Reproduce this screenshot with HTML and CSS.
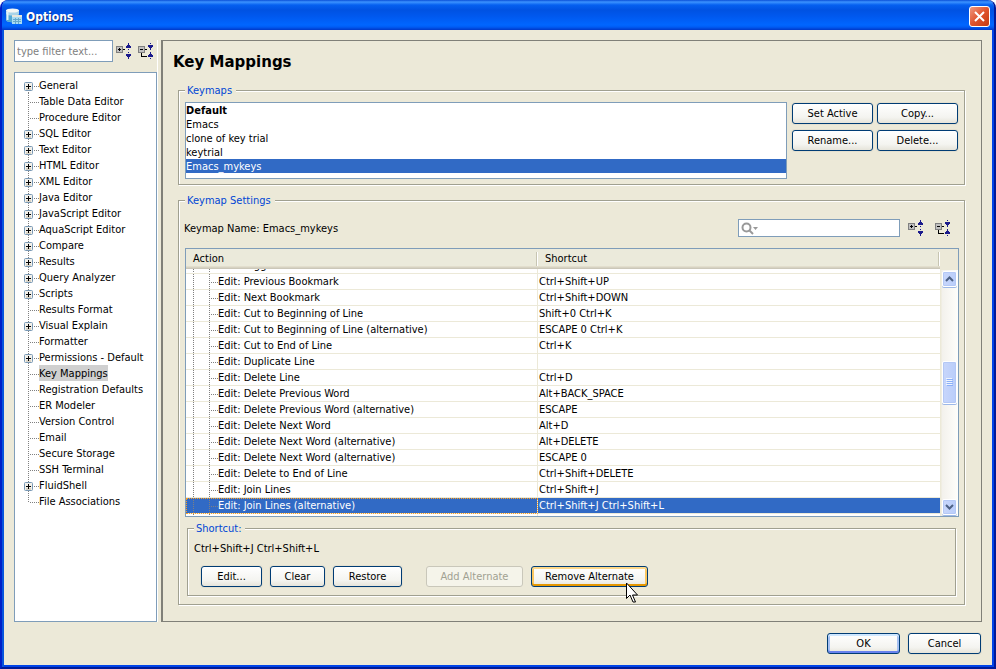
FILE: index.html
```html
<!DOCTYPE html>
<html lang="en">
<head>
    <meta charset="UTF-8">
    <meta name="viewport" content="width=device-width, initial-scale=1.0">
    <title>Options</title>
    <link rel="stylesheet" href="styles.css">
</head>
<body>
    <!-- Shared icons -->
    <svg class="defs" width="0" height="0" aria-hidden="true">
        <symbol id="plus" viewBox="0 0 9 9">
            <rect x=".5" y=".5" width="8" height="8" rx="1" fill="#f2f0ea" stroke="#7898b5"/>
            <path d="M2 6h5v2H2z" fill="#d8d2c4"/>
            <path d="M2 4.500h5M4.500 2v5" stroke="#000"/>
        </symbol>
        <symbol id="expand" viewBox="0 0 16 16">
            <path d="M.5 3.500h6v6h-6z" fill="#c0c0c0" stroke="#808080"/>
            <path d="M2 6.500h3M3.500 5v3M7 6.500h2" stroke="#000"/>
            <path d="M12 0h1v2h1v1h1v2h-5V3h1V2h1zM10 11h5v2h-1v1h-1v2h-1v-2h-1v-1h-1zM12 6h1v1h-1zM12 9h1v1h-1z" fill="#1a1a8c"/>
        </symbol>
        <symbol id="collapse" viewBox="0 0 16 16">
            <path d="M.5 3.500h6v6h-6z" fill="#c0c0c0" stroke="#808080"/>
            <path d="M2 6.500h3M7 6.500h2M3.500 10v3.500H9" fill="none" stroke="#000"/>
            <path d="M12 0h1v1h-1zM10 2h5v2h-1v1h-1v2h-1V5h-1V4h-1zM12 9h1v2h1v1h1v2h-5v-2h1v-1h1zM12 15h1v1h-1z" fill="#1a1a8c"/>
        </symbol>
    </svg>

    <div class="window">
        <header class="titlebar">
            <svg class="app-icon" viewBox="0 0 17 17" width="17" height="17" aria-hidden="true">
                <path d="M0 2v10c0 3 13 3 13 0V2z" fill="#a9d4e8"/>
                <path d="M0 6c2 2 11 2 13 0v6c0 3-13 3-13 0z" fill="#52a9d4"/>
                <ellipse cx="6.500" cy="2.500" rx="6.500" ry="2" fill="#f4f7f4"/>
                <path d="M1.500 4v8" stroke="#e3f2f8" stroke-width="2"/>
                <path d="M6 7h10v9H6z" fill="#a9dcf2"/>
                <path d="M6 7h10v2H6z" fill="#e6e6dc"/>
                <path d="M7 11.500h8M7 13.500h8M9.500 10v6M12.500 10v6" stroke="#66a9cb"/>
            </svg>
            <h1 class="window-title">Options</h1>
            <button class="close" type="button" aria-label="Close">
                <svg viewBox="0 0 11 11" width="11" height="11"><path d="M1 1l9 9M10 1l-9 9" stroke="#fff" stroke-width="2"/></svg>
            </button>
        </header>

        <main class="main">
            <nav class="sidebar">
                <div class="filter">
                    <input class="filter-input" type="text" placeholder="type filter text..." aria-label="Filter">
                    <button class="icon-button" type="button" aria-label="Expand all"><svg class="icon"><use href="#expand"/></svg></button>
                    <button class="icon-button" type="button" aria-label="Collapse all"><svg class="icon"><use href="#collapse"/></svg></button>
                </div>
                <ul class="tree">
                    <li class="branch"><button class="toggle" type="button" aria-label="Expand"><svg><use href="#plus"/></svg></button><a href="#">General</a></li>
                    <li><a href="#">Table Data Editor</a></li>
                    <li><a href="#">Procedure Editor</a></li>
                    <li class="branch"><button class="toggle" type="button" aria-label="Expand"><svg><use href="#plus"/></svg></button><a href="#">SQL Editor</a></li>
                    <li class="branch"><button class="toggle" type="button" aria-label="Expand"><svg><use href="#plus"/></svg></button><a href="#">Text Editor</a></li>
                    <li class="branch"><button class="toggle" type="button" aria-label="Expand"><svg><use href="#plus"/></svg></button><a href="#">HTML Editor</a></li>
                    <li class="branch"><button class="toggle" type="button" aria-label="Expand"><svg><use href="#plus"/></svg></button><a href="#">XML Editor</a></li>
                    <li class="branch"><button class="toggle" type="button" aria-label="Expand"><svg><use href="#plus"/></svg></button><a href="#">Java Editor</a></li>
                    <li class="branch"><button class="toggle" type="button" aria-label="Expand"><svg><use href="#plus"/></svg></button><a href="#">JavaScript Editor</a></li>
                    <li class="branch"><button class="toggle" type="button" aria-label="Expand"><svg><use href="#plus"/></svg></button><a href="#">AquaScript Editor</a></li>
                    <li class="branch"><button class="toggle" type="button" aria-label="Expand"><svg><use href="#plus"/></svg></button><a href="#">Compare</a></li>
                    <li class="branch"><button class="toggle" type="button" aria-label="Expand"><svg><use href="#plus"/></svg></button><a href="#">Results</a></li>
                    <li class="branch"><button class="toggle" type="button" aria-label="Expand"><svg><use href="#plus"/></svg></button><a href="#">Query Analyzer</a></li>
                    <li class="branch"><button class="toggle" type="button" aria-label="Expand"><svg><use href="#plus"/></svg></button><a href="#">Scripts</a></li>
                    <li><a href="#">Results Format</a></li>
                    <li class="branch"><button class="toggle" type="button" aria-label="Expand"><svg><use href="#plus"/></svg></button><a href="#">Visual Explain</a></li>
                    <li><a href="#">Formatter</a></li>
                    <li class="branch"><button class="toggle" type="button" aria-label="Expand"><svg><use href="#plus"/></svg></button><a href="#">Permissions - Default</a></li>
                    <li><a class="current" href="#">Key Mappings</a></li>
                    <li><a href="#">Registration Defaults</a></li>
                    <li><a href="#">ER Modeler</a></li>
                    <li><a href="#">Version Control</a></li>
                    <li><a href="#">Email</a></li>
                    <li><a href="#">Secure Storage</a></li>
                    <li><a href="#">SSH Terminal</a></li>
                    <li class="branch"><button class="toggle" type="button" aria-label="Expand"><svg><use href="#plus"/></svg></button><a href="#">FluidShell</a></li>
                    <li><a href="#">File Associations</a></li>
                </ul>
            </nav>

            <section class="panel">
                <h2 class="panel-title">Key Mappings</h2>

                <fieldset class="group keymaps">
                    <legend>Keymaps</legend>
                    <ul class="keymap-list" role="listbox" aria-label="Keymaps">
                        <li class="active" role="option">Default</li>
                        <li role="option">Emacs</li>
                        <li role="option">clone of key trial</li>
                        <li role="option">keytrial</li>
                        <li class="selected" role="option" aria-selected="true">Emacs_mykeys</li>
                    </ul>
                    <div class="keymap-buttons">
                        <button class="btn" type="button">Set Active</button>
                        <button class="btn" type="button">Copy...</button>
                        <button class="btn" type="button">Rename...</button>
                        <button class="btn" type="button">Delete...</button>
                    </div>
                </fieldset>

                <fieldset class="group settings">
                    <legend>Keymap Settings</legend>
                    <div class="toolbar">
                        <span class="keymap-name">Keymap Name: Emacs_mykeys</span>
                        <label class="search">
                            <svg viewBox="0 0 18 13" width="18" height="13" aria-hidden="true">
                                <circle cx="5.500" cy="5.500" r="4" fill="none" stroke="#999" stroke-width="2"/>
                                <path d="M8 8l4 4" stroke="#999" stroke-width="2"/>
                                <path d="M12 5h5l-2.500 3z" fill="#999"/>
                            </svg>
                            <input type="text" aria-label="Search">
                        </label>
                        <button class="icon-button" type="button" aria-label="Expand all"><svg class="icon"><use href="#expand"/></svg></button>
                        <button class="icon-button" type="button" aria-label="Collapse all"><svg class="icon"><use href="#collapse"/></svg></button>
                    </div>

                    <div class="table-box">
                        <table class="actions">
                            <thead>
                                <tr><th class="col-action"><span>Action</span></th><th><span>Shortcut</span></th></tr>
                            </thead>
                            <tbody>
                                <tr class="cut"><td><div>Edit: Toggle Bookmark</div></td><td></td></tr>
                                <tr><td>Edit: Previous Bookmark</td><td>Ctrl+Shift+UP</td></tr>
                                <tr><td>Edit: Next Bookmark</td><td>Ctrl+Shift+DOWN</td></tr>
                                <tr><td>Edit: Cut to Beginning of Line</td><td>Shift+0 Ctrl+K</td></tr>
                                <tr><td>Edit: Cut to Beginning of Line (alternative)</td><td>ESCAPE 0 Ctrl+K</td></tr>
                                <tr><td>Edit: Cut to End of Line</td><td>Ctrl+K</td></tr>
                                <tr><td>Edit: Duplicate Line</td><td></td></tr>
                                <tr><td>Edit: Delete Line</td><td>Ctrl+D</td></tr>
                                <tr><td>Edit: Delete Previous Word</td><td>Alt+BACK_SPACE</td></tr>
                                <tr><td>Edit: Delete Previous Word (alternative)</td><td>ESCAPE</td></tr>
                                <tr><td>Edit: Delete Next Word</td><td>Alt+D</td></tr>
                                <tr><td>Edit: Delete Next Word (alternative)</td><td>Alt+DELETE</td></tr>
                                <tr><td>Edit: Delete Next Word (alternative)</td><td>ESCAPE 0</td></tr>
                                <tr><td>Edit: Delete to End of Line</td><td>Ctrl+Shift+DELETE</td></tr>
                                <tr><td>Edit: Join Lines</td><td>Ctrl+Shift+J</td></tr>
                                <tr class="selected"><td>Edit: Join Lines (alternative)</td><td>Ctrl+Shift+J Ctrl+Shift+L</td></tr>
                                <tr class="rest"><td></td><td></td></tr>
                            </tbody>
                        </table>
                        <div class="scrollbar">
                            <button class="scroll-button" type="button" aria-label="Scroll up"><svg viewBox="0 0 9 6" width="9" height="6"><path d="M1 5l3.500-3.500L8 5" fill="none" stroke="#4d6185" stroke-width="2"/></svg></button>
                            <div class="track">
                                <div class="thumb"><svg viewBox="0 0 7 8" width="7" height="8"><path d="M0 .5h6M0 2.500h6M0 4.500h6M0 6.500h6" stroke="#eef4fe"/><path d="M1 1.500h6M1 3.500h6M1 5.500h6M1 7.500h6" stroke="#8cb0f8"/></svg></div>
                            </div>
                            <button class="scroll-button" type="button" aria-label="Scroll down"><svg viewBox="0 0 9 6" width="9" height="6"><path d="M1 1l3.500 3.500L8 1" fill="none" stroke="#4d6185" stroke-width="2"/></svg></button>
                        </div>
                    </div>

                    <fieldset class="group shortcut">
                        <legend>Shortcut:</legend>
                        <p class="shortcut-text">Ctrl+Shift+J Ctrl+Shift+L</p>
                        <div class="shortcut-buttons">
                            <button class="btn edit" type="button">Edit...</button>
                            <button class="btn clear" type="button">Clear</button>
                            <button class="btn restore" type="button">Restore</button>
                            <button class="btn add" type="button" disabled>Add Alternate</button>
                            <div class="hovered">
                                <button class="btn remove" type="button">Remove Alternate</button>
                                <svg class="cursor" viewBox="0 0 13 21" width="13" height="21" aria-hidden="true">
                                    <path d="M.5 1v15.500l3.500-3.500 3 7h2.500l-3-7h5z" fill="#fff" stroke="#000"/>
                                </svg>
                            </div>
                        </div>
                    </fieldset>
                </fieldset>
            </section>
        </main>

        <footer class="footer">
            <button class="btn ok" type="button">OK</button>
            <button class="btn cancel" type="button">Cancel</button>
        </footer>
    </div>
</body>
</html>
```
FILE: styles.css
```css
* {
    box-sizing: border-box;
}
body {
    margin: 0;
    background-color: #fff;
    color: #000;
    font-family: "DejaVu Sans Condensed", "Noto Sans", sans-serif;
    font-size: 11px;
    line-height: 14px;
}
ul, p, h1, h2, fieldset {
    margin: 0;
    padding: 0;
}
ul {
    list-style: none;
}
button, input {
    font: inherit;
    color: inherit;
}
svg {
    display: block;
}
.defs {
    position: absolute;
}

/* Window frame */
.window {
    display: flex;
    flex-direction: column;
    min-height: 100vh;
    padding: 0 2px 2px;
    background-color: #ece9d8;
    border: solid #001a98;
    border-width: 0 2px 2px;
    border-left-color: #0020c8;
    border-radius: 8px 8px 0 0;
    box-shadow: inset 2px 0 #0855dd, inset -2px -2px #0044e8;
    overflow: hidden;
}
.titlebar {
    display: flex;
    align-items: center;
    height: 30px;
    margin: 0 -2px;
    padding: 3px 4px 0;
    background: linear-gradient(#0a50d8 0, #3c93ff 2px, #0560f0 5px, #0052e2 10px, #0058ee 16px, #0066ff 25px, #005cf4 27px, #0038c8 30px);
}
.window-title {
    flex: 1;
    padding-left: 3px;
    color: #fff;
    font-size: 12px;
    line-height: 18px;
    text-shadow: 1px 1px #0a2a80;
}
.close {
    display: flex;
    align-items: center;
    justify-content: center;
    width: 21px;
    height: 21px;
    padding: 0;
    border: 1px solid #fff;
    border-radius: 3px;
    background: linear-gradient(135deg, #ee9880, #e0542e 50%, #c43a10);
}
.main {
    display: flex;
    flex: 1;
    padding: 10px 10px 0;
}

/* Tree on the left */
.sidebar {
    display: flex;
    flex-direction: column;
    width: 143px;
}
.filter {
    display: flex;
    align-items: center;
    gap: 3px;
    height: 22px;
    margin-bottom: 10px;
}
.filter-input {
    width: 99px;
    height: 22px;
    padding: 0 2px;
    border: 1px solid #7f9db9;
    background-color: #fff;
}
.filter-input::placeholder {
    color: #808080;
    opacity: 1;
}
.icon-button {
    padding: 0;
    border: 0;
    background: none;
}
.icon-button + .icon-button {
    margin-left: 3px;
}
.icon {
    width: 16px;
    height: 16px;
    shape-rendering: crispEdges;
}
.tree {
    flex: 1;
    padding-top: 4px;
    border: 1px solid #7f9db9;
    background-color: #fff;
}
.tree li {
    display: flex;
    align-items: center;
    height: 16px;
    padding-left: 24px;
    white-space: nowrap;
    background:
        repeating-linear-gradient(#808080 0 1px, transparent 1px 2px) 13px 0 / 1px 16px no-repeat,
        repeating-linear-gradient(90deg, #808080 0 1px, transparent 1px 2px) 15px 9px / 9px 1px no-repeat;
}
.tree li:first-child {
    background-position: 13px 9px, 15px 9px;
}
.tree li:last-child {
    background-size: 1px 10px, 9px 1px;
}
.tree .branch {
    padding-left: 9px;
}
.toggle {
    width: 9px;
    height: 9px;
    margin: 2px 6px 0 0;
    padding: 0;
    border: 0;
    background: none;
}
.toggle svg {
    width: 9px;
    height: 9px;
}
.tree a {
    padding-top: 2px;
    color: inherit;
    text-decoration: none;
}
.tree .current {
    background-color: #d0d0d0;
}

/* Right panel */
.panel {
    flex: 1;
    min-width: 0;
    margin-left: 4px;
    padding: 11px 16px 16px 10px;
    border: 1px solid #808078;
    border-left-width: 2px;
    box-shadow: -3px 0 #ece9d8, -4px 0 #fff;
}
.panel-title {
    margin-bottom: 12px;
    font-family: "DejaVu Sans", sans-serif;
    font-size: 15px;
    line-height: 20px;
}
.group {
    min-width: 0;
    border: 1px solid #a0a090;
    box-shadow: 1px 1px #fff, inset 1px 1px #fff;
}
.group > legend {
    height: 13px;
    margin-left: 5px;
    padding: 0 4px 0 2px;
    line-height: 13px;
    color: #0046d5;
    background-color: #ece9d8;
}
.keymaps {
    display: flex;
    gap: 5px;
    margin: 0 0 9px 5px;
    padding: 5px 6px;
}
.keymaps > legend {
    margin-left: 0;
}
.keymap-list {
    flex: 1;
    height: 77px;
    border: 1px solid #7f9db9;
    background-color: #fff;
}
.keymap-list li {
    height: 14px;
    line-height: 16px;
}
.keymap-list .active {
    font-weight: bold;
}
.selected {
    background-color: #316ac5;
    color: #fff;
}
.keymap-buttons {
    display: grid;
    grid-template-columns: 81px 81px;
    grid-auto-rows: 21px;
    gap: 6px 4px;
    padding-top: 1px;
}
.btn {
    height: 21px;
    padding: 0;
    border: 1px solid #003c74;
    border-radius: 3px;
    background: linear-gradient(#fff, #f4f4f0 70%, #e6e4da);
    line-height: 19px;
    box-shadow: 0 0 0 1px #e4e0d0;
}
.btn:disabled {
    border-color: #c9c7ba;
    background: #f5f4ea;
    color: #a1a192;
    box-shadow: none;
}

/* Keymap settings */
.settings {
    margin-left: 5px;
    padding: 12px 5px 8px 5px;
}
.settings > legend {
    margin-left: 1px;
}
.toolbar {
    display: flex;
    align-items: center;
    gap: 8px;
    height: 18px;
    margin-bottom: 11px;
    padding-right: 8px;
}
.keymap-name {
    flex: 1;
    padding-top: 2px;
}
.toolbar .icon-button + .icon-button {
    margin-left: 3px;
}
.search {
    display: flex;
    align-items: center;
    width: 162px;
    height: 18px;
    padding-left: 2px;
    border: 1px solid #7f9db9;
    background-color: #fff;
}
.search input {
    flex: 1;
    min-width: 0;
    padding: 0 2px;
    border: 0;
    outline: 0;
    background: none;
}
.table-box {
    display: flex;
    margin: 0 0 5px 1px;
    border: 1px solid #7f9db9;
}
.actions {
    flex: 1;
    width: 100%;
    table-layout: fixed;
    border-collapse: separate;
    border-spacing: 0;
    background-color: #fff;
}
.actions th {
    height: 20px;
    padding: 0 1px 0 0;
    background: linear-gradient(#ebeadb 17px, #e2decd 17px 18px, #d6d2c2 18px 19px, #cbc7b8 19px);
    font-weight: normal;
    text-align: left;
}
.actions th span {
    display: block;
    padding-left: 7px;
    border-right: 1px solid #c7c5b2;
    box-shadow: 1px 0 #fff;
}
.col-action {
    width: 352px;
}
.actions td {
    height: 16px;
    padding: 0 0 0 1px;
    border-bottom: 1px solid #ece9d8;
    line-height: 15px;
    white-space: nowrap;
}
.actions td:first-child {
    padding-left: 32px;
    border-right: 1px solid #ece9d8;
    background:
        repeating-linear-gradient(#808080 0 1px, transparent 1px 2px) 7px 0 / 1px 16px no-repeat,
        repeating-linear-gradient(#808080 0 1px, transparent 1px 2px) 23px 0 / 1px 16px no-repeat,
        repeating-linear-gradient(90deg, #808080 0 1px, transparent 1px 2px) 25px 8px / 7px 1px no-repeat;
}
.actions .cut td {
    height: 5px;
}
.cut div {
    display: flex;
    align-items: flex-end;
    height: 4px;
    overflow: hidden;
}
.actions .rest td {
    height: 2px;
    border-bottom: 0;
}
.actions .selected td:first-child {
    outline: 1px dotted #ffa020;
    outline-offset: -1px;
}
.scrollbar {
    display: flex;
    flex-direction: column;
    width: 18px;
    margin-top: 21px;
    padding: 1px 1px 1px 2px;
    background: linear-gradient(90deg, #ece9d8 1px, #f3f1ec 2px, #fefefb);
}
.scroll-button, .thumb {
    display: flex;
    align-items: center;
    justify-content: center;
    border: 1px solid #fff;
    border-radius: 2px;
    background: linear-gradient(90deg, #c8d6fb, #b9cdfa);
    box-shadow: inset 0 0 0 1px #b4c8f6, 0 1px #9db8e8;
}
.scroll-button {
    height: 16px;
    padding: 0;
}
.track {
    display: flex;
    flex: 1;
    flex-direction: column;
}
.track::before {
    content: "";
    flex: 74;
}
.track::after {
    content: "";
    flex: 96;
}
.thumb {
    height: 43px;
}

/* Shortcut box */
.shortcut {
    margin: 0 3px 0 3px;
    padding: 6px 6px 8px;
}
.shortcut > legend {
    margin-left: 0;
}
.shortcut-text {
    margin-bottom: 9px;
    line-height: 16px;
}
.shortcut-buttons {
    display: flex;
    gap: 8px;
    padding-left: 7px;
}
.edit {
    width: 61px;
}
.clear {
    width: 55px;
}
.restore {
    width: 69px;
}
.add {
    width: 97px;
    margin-left: 16px;
}
.remove {
    width: 117px;
    box-shadow: inset 0 2px #fdd889, inset 0 -2px #e59700, inset 2px 0 #fbc761, inset -2px 0 #fbc761;
}
.hovered {
    position: relative;
}
.cursor {
    position: absolute;
    left: 95px;
    top: 16px;
}

/* Dialog buttons */
.footer {
    display: flex;
    justify-content: flex-end;
    gap: 8px;
    padding: 11px 11px;
}
.ok, .cancel {
    width: 73px;
}
.ok {
    box-shadow: inset 0 2px #cee7ff, inset 0 -2px #6982ee, inset 2px 0 #a6c1f2, inset -2px 0 #a6c1f2;
}
```
